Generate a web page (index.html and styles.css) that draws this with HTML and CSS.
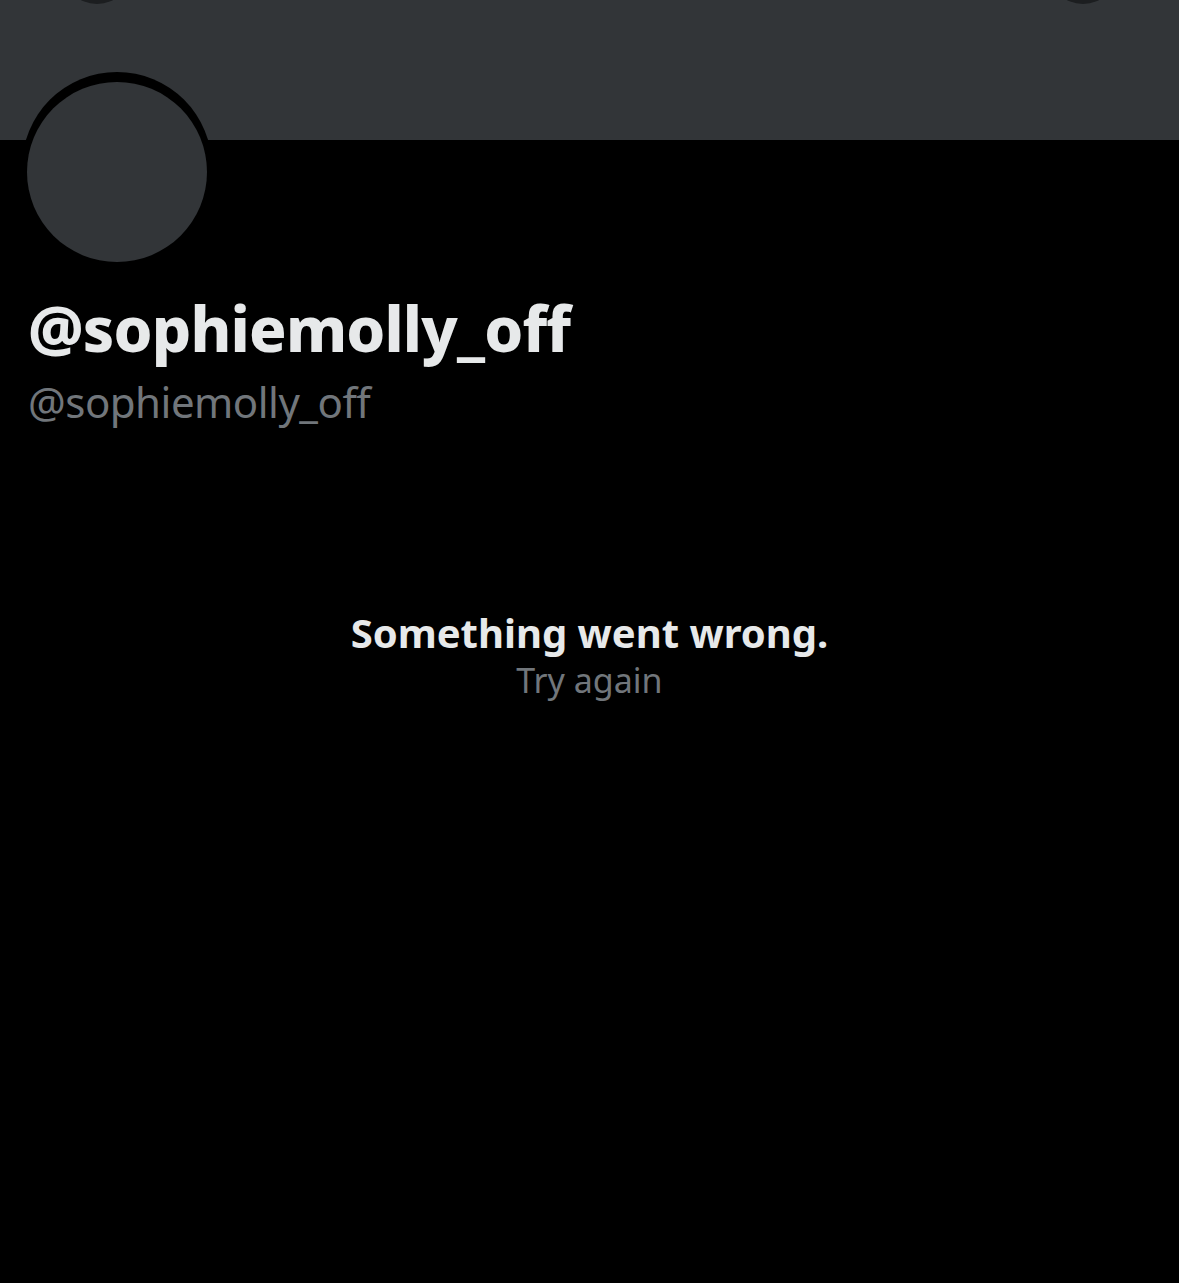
FILE: index.html
```html
<!DOCTYPE html>
<html lang="en">

<head>
    <meta charset="UTF-8">
    <meta name="viewport" content="width=device-width, initial-scale=1.0">
    <title>@sophiemolly_off</title>
    <link rel="stylesheet" href="styles.css">
</head>

<body>
    <div class="banner">
        <span class="navBtn left"></span>
        <span class="navBtn right"></span>
    </div>

    <div class="profile">
        <div class="avatarRing">
            <div class="avatar"></div>
        </div>
        <h1 class="name">@sophiemolly_off</h1>
        <p class="handle">@sophiemolly_off</p>
    </div>

    <div class="error">
        <h2>Something went wrong.</h2>
        <p>Try again</p>
    </div>
</body>

</html>
```

FILE: styles.css
```css
* {
    margin: 0;
    box-sizing: border-box;
}

body {
    background: #000;
    height: 100vh;
    overflow: hidden;
    font-family: "Noto Sans", "Open Sans", sans-serif;
}

.banner {
    position: relative;
    height: 140px;
    background: #323538;
    overflow: hidden;
}

.navBtn {
    position: absolute;
    top: -66px;
    width: 70px;
    height: 70px;
    border-radius: 50%;
    background: #1c1e20;
}

.navBtn.left {
    left: 62px;
}

.navBtn.right {
    left: 1048px;
}

.profile {
    padding: 0 28px;
    margin-top: -68px;
}

.avatarRing {
    width: 190px;
    height: 190px;
    margin-left: -6px;
    padding: 10px 5px 0 5px;
    border-radius: 50%;
    background: #000;
    position: relative;
}

.avatar {
    width: 180px;
    height: 180px;
    border-radius: 50%;
    background: #323538;
}

.name {
    margin-top: 30px;
    font-size: 62px;
    font-weight: 800;
    line-height: 72px;
    color: #e7e9ea;
    letter-spacing: -0.8px;
}

.handle {
    margin-top: 12px;
    font-size: 42px;
    line-height: 52px;
    color: #71767b;
    letter-spacing: -0.5px;
}

.error {
    margin-top: 180px;
    text-align: center;
}

.error h2 {
    font-size: 40px;
    font-weight: 700;
    line-height: 50px;
    color: #e7e9ea;
}

.error p {
    font-size: 34px;
    line-height: 44px;
    color: #71767b;
}
```
